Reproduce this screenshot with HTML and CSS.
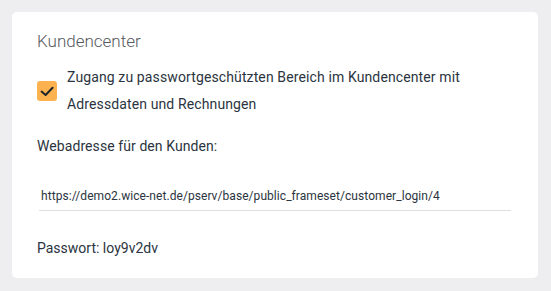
FILE: index.html
```html
<!DOCTYPE html>
<html lang="de">
<head>
<meta charset="utf-8">
<link rel="stylesheet" href="styles.css">
</head>
<body>
<div class="page">
  <section class="card">
    <h2 class="title">Kundencenter</h2>
    <div class="check-row">
      <span class="checkbox">
        <svg width="20" height="20" viewBox="0 0 20 20"><path d="M4.6 10.6 L8.6 14 L15.6 6.8" fill="none" stroke="#1f2429" stroke-width="2" stroke-linecap="round" stroke-linejoin="round"/></svg>
      </span>
      <span class="check-label">Zugang zu passwortgeschützten Bereich im Kundencenter mit Adressdaten und Rechnungen</span>
    </div>
    <div class="label">Webadresse für den Kunden:</div>
    <div class="url-field">https://demo2.wice-net.de/pserv/base/public_frameset/customer_login/4</div>
    <div class="password">Passwort: loy9v2dv</div>
  </section>
</div>
</body>
</html>
```
FILE: styles.css
```css
html, body {
  margin: 0;
  padding: 0;
  background: #eeeef0;
}
body {
  font-family: Roboto, "Noto Sans", sans-serif;
  color: #2b3440;
}
.page {
  padding: 12px 13px 13px 12px;
}
.card {
  background: #ffffff;
  border-radius: 5px;
  height: 266px;
  box-sizing: border-box;
  padding: 19px 25px 0 25px;
}
.title {
  margin: 0;
  font-size: 17px;
  font-weight: 300;
  color: #555a60;
  line-height: 20px;
}
.check-row {
  display: flex;
  align-items: center;
  gap: 10px;
  margin-top: 13px;
}
.checkbox {
  flex: none;
  width: 20px;
  height: 20px;
  border-radius: 3px;
  background: #fbb24f;
  display: flex;
}
.check-label {
  font-size: 14px;
  letter-spacing: 0.12px;
  line-height: 27px;
  width: 420px;
}
.label {
  margin-top: 18px;
  font-size: 14px;
  letter-spacing: 0.08px;
  line-height: 20px;
}
.url-field {
  margin-top: 30px;
  margin-left: 2px;
  width: 472px;
  box-sizing: border-box;
  padding: 0 0 4px 2px;
  font-size: 12px;
  letter-spacing: 0.06px;
  line-height: 20px;
  border-bottom: 1px solid #dedede;
}
.password {
  margin-top: 27px;
  font-size: 14px;
  line-height: 20px;
}
```
